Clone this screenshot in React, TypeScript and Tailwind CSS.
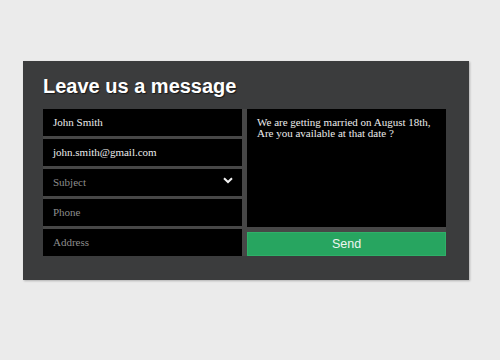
import { ReactNode } from "react"

const Field = ({ children, muted, chevron }: { children: ReactNode; muted?: boolean; chevron?: boolean }) => (
  <div className="flex h-[27px] items-center justify-between bg-black pl-[10px] pr-[8px]">
    <span className={muted ? "text-[#8d8d8d]" : "text-[#ececec]"}>{children}</span>
    {chevron && (
      <svg width="10" height="7" viewBox="0 0 10 7" className="mr-[1px] mb-[4px]">
        <path d="M1 1.2 L5 5 L9 1.2" fill="none" stroke="#f2f2f2" strokeWidth="2" />
      </svg>
    )}
  </div>
)

export default function App() {
  return (
    <div className="min-h-[360px] bg-[#ebebeb] pt-[61px]">
      <div className="ml-[23px] w-[446px] bg-[#3b3c3d] pt-[15px] pb-[24px] pl-[20px] pr-[23px] shadow-[1px_1px_2px_rgba(0,0,0,0.25)]">
        <h1 className="mb-[13px] font-['Liberation_Sans',Arial,sans-serif] text-[20px] leading-[20px] font-bold text-white [text-shadow:1px_1px_1px_rgba(0,0,0,0.6)]">
          Leave us a message
        </h1>
        <div className="grid grid-cols-[199px_199px] gap-[5px] bg-[#474747] font-['Liberation_Serif','Times_New_Roman',serif] text-[11px]">
          <div className="flex flex-col gap-[3px]">
            <Field>John Smith</Field>
            <Field>john.smith@gmail.com</Field>
            <Field muted chevron>Subject</Field>
            <Field muted>Phone</Field>
            <Field muted>Address</Field>
          </div>
          <div className="flex flex-col gap-[5px]">
            <div className="h-[118px] bg-black px-[10px] pt-[8px] leading-[11px] text-[#ececec]">
              We are getting married on August 18th,
              <br />
              Are you available at that date ?
            </div>
            <div className="flex h-[24px] items-center justify-center border border-[#2fb068] bg-[#27a560] font-['Liberation_Sans',Arial,sans-serif] text-[12.5px] text-[#eef5f0]">
              Send
            </div>
          </div>
        </div>
      </div>
    </div>
  )
}
